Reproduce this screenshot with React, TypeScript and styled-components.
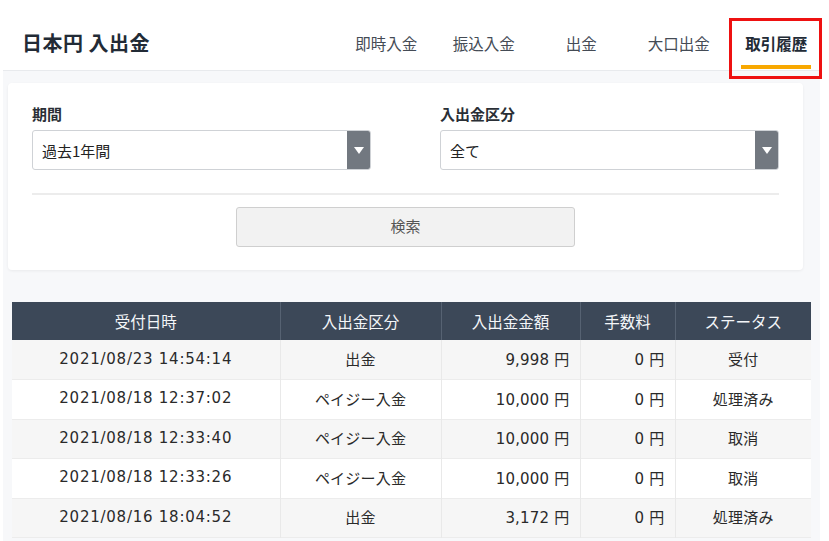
import React from "react";
import styled, { createGlobalStyle } from "styled-components";

const Global = createGlobalStyle`
  html, body { margin: 0; padding: 0; background: #ffffff; }
  body { font-family: "Noto Sans CJK JP", "Noto Sans", sans-serif; color: #333; }
  * { box-sizing: border-box; }
`;

const Page = styled.div`
  position: relative;
  width: 829px;
  height: 541px;
  overflow: hidden;
  background: #fff;
`;

const Header = styled.header`
  height: 71px;
  padding: 16px 0 0 19px;
  display: flex;
  align-items: center;
  border-bottom: 1px solid #e8eaed;
  margin-left: 3px;
  width: 817px;
`;

const Title = styled.h1`
  margin: -16px 0 0 0;
  padding-top: 16px;
  font-size: 20px;
  font-weight: 700;
  color: #222b36;
  letter-spacing: 0.5px;
  flex: 1;
  line-height: 24px;
`;

const Nav = styled.nav`
  display: flex;
  height: 54px;
  margin-right: -5px;
`;

const NavItem = styled.div<{ $active?: boolean }>`
  position: relative;
  width: 97.5px;
  display: flex;
  align-items: center;
  justify-content: center;
  font-size: 15.5px;
  color: ${(p) => (p.$active ? "#222b36" : "#444b55")};
  font-weight: ${(p) => (p.$active ? 700 : 400)};
  line-height: 22px;
  &::after {
    content: "";
    display: ${(p) => (p.$active ? "block" : "none")};
    position: absolute;
    left: 50%;
    transform: translateX(-50%);
    width: 70px;
    height: 4px;
    bottom: 1px;
    background: #f8a800;
  }
`;

const Highlight = styled.div`
  position: absolute;
  left: 729px;
  top: 18px;
  width: 93px;
  height: 61px;
  border: 3px solid #ee1111;
  pointer-events: none;
`;

const Body = styled.main`
  margin-left: 3px;
  width: 817px;
  background: #f7f8fa;
  padding: 12px 0 0 0;
  min-height: 470px;
`;

const Card = styled.section`
  margin-left: 5px;
  width: 795px;
  background: #fff;
  border-radius: 4px;
  box-shadow: 0 1px 3px rgba(0, 0, 0, 0.06);
  padding: 20px 24px 23px 24px;
`;

const FieldRow = styled.div`
  display: grid;
  grid-template-columns: 339px 339px;
  column-gap: 69px;
`;

const Field = styled.div`
  display: flex;
  flex-direction: column;
  gap: 5px;
`;

const Label = styled.label`
  font-size: 15px;
  font-weight: 700;
  color: #2a2f36;
  line-height: 22px;
`;

const Select = styled.div`
  height: 40px;
  border: 1px solid #cfd2d6;
  border-radius: 3px;
  display: flex;
  align-items: stretch;
  overflow: hidden;
  background: #fff;
`;

const SelectValue = styled.div`
  flex: 1;
  display: flex;
  align-items: center;
  padding-left: 9px;
  font-size: 15px;
  color: #222;
`;

const SelectArrow = styled.div`
  width: 23px;
  background: #727880;
  display: flex;
  align-items: center;
  justify-content: center;
`;

const Divider = styled.hr`
  border: none;
  height: 2px;
  background: #ececec;
  margin: 23px 0 12px 0;
`;

const ButtonRow = styled.div`
  display: flex;
  justify-content: center;
`;

const SearchButton = styled.button`
  width: 339px;
  height: 40px;
  background: #f2f2f2;
  border: 1px solid #cfcfcf;
  border-radius: 3px;
  font-family: "Noto Sans CJK JP", sans-serif;
  font-size: 15px;
  line-height: 20px;
  padding: 0 0 3px 0;
  color: #555;
`;

const TableWrap = styled.div`
  margin: 32px 0 0 9px;
  width: 799px;
`;

const Table = styled.table`
  width: 799px;
  border-collapse: collapse;
  table-layout: fixed;
  font-family: "DejaVu Sans", "Noto Sans CJK JP", sans-serif;
  font-size: 15px;
`;

const Th = styled.th`
  height: 38px;
  background: #3c4858;
  color: #f4f6f8;
  font-weight: 400;
  font-size: 15.5px;
  font-family: "Noto Sans CJK JP", sans-serif;
  text-align: center;
  border-left: 1px solid #566272;
  padding: 0;
  &:first-child { border-left: none; }
`;

const Tr = styled.tr<{ $odd: boolean }>`
  background: ${(p) => (p.$odd ? "#f6f6f6" : "#ffffff")};
  border-bottom: 1px solid #ececec;
`;

const Td = styled.td<{ $align?: "left" | "center" | "right"; $wide?: boolean }>`
  height: 39.5px;
  padding: 0 ${(p) => (p.$align === "right" ? "10px" : "0")} 2px 0;
  text-align: ${(p) => p.$align || "center"};
  color: #2a2a2a;
  letter-spacing: ${(p) => (p.$wide ? "0.75px" : "0.2px")};
  border-left: 1px solid #e9e9e9;
  white-space: nowrap;
  &:first-child { border-left: none; }
`;

const Arrow = () => (
  <svg width="10" height="7" viewBox="0 0 10 7">
    <path d="M0 0 H10 L5 7 Z" fill="#ffffff" />
  </svg>
);

const rows = [
  ["2021/08/23 14:54:14", "出金", "9,998 円", "0 円", "受付"],
  ["2021/08/18 12:37:02", "ペイジー入金", "10,000 円", "0 円", "処理済み"],
  ["2021/08/18 12:33:40", "ペイジー入金", "10,000 円", "0 円", "取消"],
  ["2021/08/18 12:33:26", "ペイジー入金", "10,000 円", "0 円", "取消"],
  ["2021/08/16 18:04:52", "出金", "3,172 円", "0 円", "処理済み"],
];

const navItems = ["即時入金", "振込入金", "出金", "大口出金", "取引履歴"];

export default function App() {
  return (
    <Page>
      <Global />
      <Header>
        <Title>日本円 入出金</Title>
        <Nav>
          {navItems.map((n) => (
            <NavItem key={n} $active={n === "取引履歴"}>
              {n}
            </NavItem>
          ))}
        </Nav>
      </Header>
      <Highlight />
      <Body>
        <Card>
          <FieldRow>
            <Field>
              <Label>期間</Label>
              <Select>
                <SelectValue>過去1年間</SelectValue>
                <SelectArrow>
                  <Arrow />
                </SelectArrow>
              </Select>
            </Field>
            <Field>
              <Label>入出金区分</Label>
              <Select>
                <SelectValue>全て</SelectValue>
                <SelectArrow>
                  <Arrow />
                </SelectArrow>
              </Select>
            </Field>
          </FieldRow>
          <Divider />
          <ButtonRow>
            <SearchButton>検索</SearchButton>
          </ButtonRow>
        </Card>
        <TableWrap>
          <Table>
            <colgroup>
              <col style={{ width: 268 }} />
              <col style={{ width: 161 }} />
              <col style={{ width: 139 }} />
              <col style={{ width: 95 }} />
              <col style={{ width: 136 }} />
            </colgroup>
            <thead>
              <tr>
                <Th>受付日時</Th>
                <Th>入出金区分</Th>
                <Th>入出金金額</Th>
                <Th>手数料</Th>
                <Th>ステータス</Th>
              </tr>
            </thead>
            <tbody>
              {rows.map((r, i) => (
                <Tr key={i} $odd={i % 2 === 0}>
                  <Td $wide>{r[0]}</Td>
                  <Td>{r[1]}</Td>
                  <Td $align="right">{r[2]}</Td>
                  <Td $align="right">{r[3]}</Td>
                  <Td>{r[4]}</Td>
                </Tr>
              ))}
            </tbody>
          </Table>
        </TableWrap>
      </Body>
    </Page>
  );
}
